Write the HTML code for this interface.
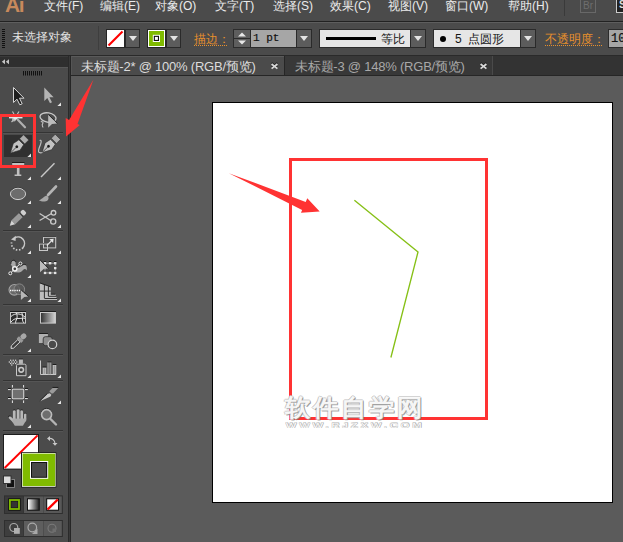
<!DOCTYPE html>
<html><head><meta charset="utf-8">
<style>
*{margin:0;padding:0;box-sizing:border-box}
html,body{width:623px;height:542px;overflow:hidden;background:#5b5b5b;font-family:"Liberation Sans",sans-serif}
.a{position:absolute}
#menubar{left:0;top:0;width:623px;height:22px;background:#4b4b4b;border-bottom:1px solid #222}
.mi{position:absolute;top:-2.4px;font-size:12px;font-weight:500;color:#ececec;line-height:16px;white-space:nowrap}
#ctrl{left:0;top:22px;width:623px;height:34px;background:#4b4b4b;box-shadow:inset 0 1px 0 #5e5e5e;border-bottom:1px solid #262626}
#tools{left:0;top:56px;width:68px;height:486px;background:#4b4b4b}
#toolshead{left:0;top:56px;width:68px;height:12px;background:#2f2f2f;border-top:1px solid #3a3a3a;border-bottom:1px solid #585858}
#tabbar{left:71px;top:55px;width:552px;height:21px;background:#333333;border-top:1px solid #2a2a2a;border-bottom:1px solid #262626}
.tab{position:absolute;top:0;height:19px;font-size:13px;line-height:19px;white-space:nowrap;letter-spacing:-0.22px}
#canvas{left:71px;top:76px;width:552px;height:466px;background:#5b5b5b}
#artboard{left:212px;top:102px;width:401px;height:401px;background:#fff;border:1px solid #000}
.orange{color:#e8902c}
.dd{width:16px;height:19px;background:#2a2a2a}
.dd::before{content:"";position:absolute;left:1px;top:1px;right:1px;bottom:1px;background:#5c5c5c}
.dd::after{content:"";position:absolute;left:4px;top:7px;border-left:4px solid transparent;border-right:4px solid transparent;border-top:5px solid #e4e4e4}
</style></head><body>
<div id="menubar" class="a">
  <div class="a" style="left:5px;top:-7px;font-size:21px;font-weight:bold;color:#c8895c;letter-spacing:-1.3px;line-height:24px">Ai</div>
  <div class="mi" style="left:44px">文件(F)</div>
  <div class="mi" style="left:100px">编辑(E)</div>
  <div class="mi" style="left:155px">对象(O)</div>
  <div class="mi" style="left:215px">文字(T)</div>
  <div class="mi" style="left:273px">选择(S)</div>
  <div class="mi" style="left:330px">效果(C)</div>
  <div class="mi" style="left:388px">视图(V)</div>
  <div class="mi" style="left:445px">窗口(W)</div>
  <div class="mi" style="left:508px">帮助(H)</div>
  <div class="a" style="left:564px;top:0;width:1px;height:16px;background:#3a3a3a"></div>
  <div class="a" style="left:580px;top:-3px;width:16px;height:16px;border:1px solid #686868;color:#6e6e6e;font-size:10px;line-height:16px;text-align:center">Br</div>
  <div class="a" style="left:616px;top:-3px;width:16px;height:16px;border:1px solid #ccc;background:#222;color:#ddd;font-size:10px;font-weight:bold;line-height:14px;padding-left:2px">St</div>
</div>
<div id="ctrl" class="a">
  <div class="a" style="left:2px;top:7px;width:3px;height:20px;background:repeating-linear-gradient(#111 0 1px,transparent 1px 2px)"></div>
  <div class="a" style="left:12px;top:8px;font-size:12px;font-weight:500;line-height:15px;color:#e2e2e2;white-space:nowrap">未选择对象</div>
  <div class="a" style="left:98px;top:4px;width:1px;height:24px;background:#3e3e3e"></div>
  <!-- fill swatch -->
  <svg class="a" style="left:106px;top:7px" width="19" height="19"><rect width="19" height="19" fill="#262626"/><rect x="1" y="1" width="17" height="17" fill="#fff"/><line x1="2.5" y1="16.5" x2="16.5" y2="2.5" stroke="#f00" stroke-width="2.2"/></svg>
  <div class="a dd" style="left:125px;top:7px;width:15px"></div>
  <!-- stroke swatch -->
  <svg class="a" style="left:147px;top:7px" width="19" height="19"><rect width="19" height="19" fill="#262626"/><rect x="1" y="1" width="17" height="17" fill="#fff"/><rect x="2" y="2" width="15" height="15" fill="#80bb00"/><rect x="5.8" y="5.8" width="7.2" height="7.2" fill="#fff"/><rect x="6.8" y="6.8" width="5.2" height="5.2" fill="#111"/><rect x="7.9" y="7.9" width="3" height="3" fill="#fff"/></svg>
  <div class="a dd" style="left:166px;top:7px;width:15px"></div>
  <div class="a orange" style="left:194px;top:10px;width:33px;height:14px;overflow:hidden;font-size:12px;font-weight:500;line-height:14px;white-space:nowrap;border-bottom:1px dotted #e8902c">描边：</div>
  <!-- spinner -->
  <div class="a" style="left:233px;top:7px;width:18px;height:19px;background:#2c2c2c"></div>
  <div class="a" style="left:234px;top:8px;width:16px;height:8px;background:#5e5e5e"></div>
  <div class="a" style="left:234px;top:17px;width:16px;height:8px;background:#5e5e5e"></div>
  <svg class="a" style="left:234px;top:8px" width="16" height="17"><path d="M4 6.5 L8 2.5 L12 6.5Z M4 10.5 L8 14.5 L12 10.5Z" fill="#e8e8e8"/></svg>
  <div class="a" style="left:250px;top:7px;width:47px;height:19px;background:#2c2c2c"></div>
  <div class="a" style="left:251px;top:8px;width:45px;height:17px;background:#a6a6a6;font-family:'Liberation Mono',monospace;font-size:11px;line-height:17px;color:#111;padding-left:2px;white-space:pre;-webkit-text-stroke:0.2px #111">1 pt</div>
  <div class="a dd" style="left:296px;top:7px"></div>
  <!-- profile -->
  <div class="a" style="left:319px;top:7px;width:92px;height:19px;background:#2c2c2c"></div>
  <div class="a" style="left:320px;top:8px;width:90px;height:17px;background:#e6e6e6"></div>
  <div class="a" style="left:326px;top:15px;width:50px;height:3px;background:#000"></div>
  <div class="a" style="left:381px;top:9px;font-size:12px;font-weight:500;line-height:17px;color:#151515;white-space:nowrap">等比</div>
  <div class="a dd" style="left:410px;top:7px"></div>
  <!-- brush -->
  <div class="a" style="left:433px;top:7px;width:88px;height:19px;background:#2c2c2c"></div>
  <div class="a" style="left:434px;top:8px;width:86px;height:17px;background:#e6e6e6"></div>
  <div class="a" style="left:439.5px;top:13.5px;width:6px;height:6px;border-radius:50%;background:#000"></div>
  <div class="a" style="left:455px;top:9px;font-size:12px;font-weight:500;line-height:17px;color:#151515;white-space:pre">5  点圆形</div>
  <div class="a dd" style="left:520px;top:7px"></div>
  <div class="a orange" style="left:545px;top:10px;width:57px;height:14px;overflow:hidden;font-size:12px;font-weight:500;line-height:14px;white-space:nowrap;border-bottom:1px dotted #e8902c">不透明度：</div>
  <div class="a" style="left:608px;top:7px;width:30px;height:19px;background:#2c2c2c"></div>
  <div class="a" style="left:609px;top:8px;width:30px;height:17px;background:#a6a6a6;font-family:'Liberation Mono',monospace;font-size:12px;line-height:17px;color:#111;padding-left:2px;padding-top:1px;-webkit-text-stroke:0.2px #111">10</div>
</div>
<div id="tools" class="a"></div>
<div id="toolshead" class="a"></div>
<!--TOOLS--><svg class="a" style="left:0;top:0" width="68" height="542" viewBox="0 0 68 542"><path d="M5 59.3 L1.8 61.8 L5 64.3Z M9 59.3 L5.8 61.8 L9 64.3Z" fill="#c4c4c4"/><rect x="23" y="71" width="1" height="4.5" fill="#111"/><rect x="25" y="71" width="1" height="4.5" fill="#111"/><rect x="27" y="71" width="1" height="4.5" fill="#111"/><rect x="29" y="71" width="1" height="4.5" fill="#111"/><rect x="31" y="71" width="1" height="4.5" fill="#111"/><rect x="33" y="71" width="1" height="4.5" fill="#111"/><rect x="35" y="71" width="1" height="4.5" fill="#111"/><rect x="37" y="71" width="1" height="4.5" fill="#111"/><rect x="39" y="71" width="1" height="4.5" fill="#111"/><rect x="41" y="71" width="1" height="4.5" fill="#111"/><rect x="3" y="132" width="60" height="1" fill="#343434"/><rect x="3" y="133" width="60" height="1" fill="#555555"/><rect x="3" y="230" width="60" height="1" fill="#343434"/><rect x="3" y="231" width="60" height="1" fill="#555555"/><rect x="3" y="304" width="60" height="1" fill="#343434"/><rect x="3" y="305" width="60" height="1" fill="#555555"/><rect x="3" y="354" width="60" height="1" fill="#343434"/><rect x="3" y="355" width="60" height="1" fill="#555555"/><rect x="3" y="380" width="60" height="1" fill="#343434"/><rect x="3" y="381" width="60" height="1" fill="#555555"/><rect x="3" y="430" width="60" height="1" fill="#343434"/><rect x="3" y="431" width="60" height="1" fill="#555555"/><rect x="4" y="135" width="28" height="22" fill="#303030"/><path d="M61 102.4 L61 106 L57.4 106 Z" fill="#e6e6e6"/><path d="M31 153.4 L31 157 L27.4 157 Z" fill="#e6e6e6"/><path d="M31 176.4 L31 180 L27.4 180 Z" fill="#e6e6e6"/><path d="M61 176.4 L61 180 L57.4 180 Z" fill="#e6e6e6"/><path d="M31 200.4 L31 204 L27.4 204 Z" fill="#e6e6e6"/><path d="M61 200.4 L61 204 L57.4 204 Z" fill="#e6e6e6"/><path d="M31 224.4 L31 228 L27.4 228 Z" fill="#e6e6e6"/><path d="M61 224.4 L61 228 L57.4 228 Z" fill="#e6e6e6"/><path d="M31 250.4 L31 254 L27.4 254 Z" fill="#e6e6e6"/><path d="M61 250.4 L61 254 L57.4 254 Z" fill="#e6e6e6"/><path d="M31 274.4 L31 278 L27.4 278 Z" fill="#e6e6e6"/><path d="M31 298.4 L31 302 L27.4 302 Z" fill="#e6e6e6"/><path d="M61 298.4 L61 302 L57.4 302 Z" fill="#e6e6e6"/><path d="M31 348.4 L31 352 L27.4 352 Z" fill="#e6e6e6"/><path d="M31 374.4 L31 378 L27.4 378 Z" fill="#e6e6e6"/><path d="M61 374.4 L61 378 L57.4 378 Z" fill="#e6e6e6"/><path d="M61 400.4 L61 404 L57.4 404 Z" fill="#e6e6e6"/><path d="M31 424.4 L31 428 L27.4 428 Z" fill="#e6e6e6"/><path d="M13.5 87.5 L13.5 102.5 L17 99.2 L19.8 104.8 L22.2 103.8 L19.5 98.2 L24 98.2 Z" fill="#1e1e1e" stroke="#d4d4d4" stroke-width="1" stroke-linejoin="miter"/><path d="M44.3 87.5 L44.3 101 L47.3 98 L50 103.3 L52 102.3 L49.4 97.2 L53.6 97.2 Z" fill="#b4b4b4"/><g stroke="#c4c4c4" stroke-width="1.1"><line x1="12.5" y1="111.5" x2="15.6" y2="117"/><line x1="19" y1="111.5" x2="15.6" y2="117"/><line x1="11.5" y1="122" x2="15.6" y2="118"/></g><circle cx="14" cy="119.5" r="2" fill="#b8b8b8"/><rect x="9" y="116.6" width="13.5" height="1.8" fill="#dfe8ea"/><circle cx="15.6" cy="117.6" r="2.2" fill="#e8e8e8"/><line x1="17.8" y1="119.8" x2="25" y2="127.3" stroke="#b0b0b0" stroke-width="2.2" stroke-linecap="round"/><ellipse cx="48" cy="117.5" rx="8.1" ry="4.6" transform="rotate(10 48 117.5)" fill="none" stroke="#c8c8c8" stroke-width="1.3"/><path d="M40.8 121.5 C 42.5 121.5, 43.8 122.5, 42.5 124 C 41.5 125, 42.8 126.5, 43 127.5" fill="none" stroke="#c4c4c4" stroke-width="1.1"/><path d="M48.2 114.8 L57 123.6 L52 123.9 L48.2 127.8 Z" fill="#bcbcbc"/><path d="M48.6 114.6 L57.4 123.3" stroke="#1e1e1e" stroke-width="0.8"/><g transform="translate(10.3,153.2) rotate(-45)"><path d="M0 0 L9 -4.8 L15.5 -3.4 L15.5 3.4 L9 4.8 Z" fill="#c2c2c2" stroke="#262626" stroke-width="0.6"/><line x1="0.8" y1="0" x2="8" y2="0" stroke="#3a3a3a" stroke-width="0.8"/><circle cx="9.2" cy="0" r="1.4" fill="#1a1a1a"/><rect x="16.8" y="-3.7" width="5.6" height="7.4" fill="#acacac" stroke="#262626" stroke-width="0.5"/></g><g transform="translate(42,152.7) rotate(-45)"><path d="M0 0 L9 -4.8 L15.5 -3.4 L15.5 3.4 L9 4.8 Z" fill="#c2c2c2" stroke="#262626" stroke-width="0.6"/><line x1="0.8" y1="0" x2="8" y2="0" stroke="#3a3a3a" stroke-width="0.8"/><circle cx="9.2" cy="0" r="1.4" fill="#1a1a1a"/><rect x="16.8" y="-3.7" width="5.6" height="7.4" fill="#acacac" stroke="#262626" stroke-width="0.5"/></g><path d="M39.6 140.5 C 41.5 139.5, 41.5 142, 40.5 144.5 C 39 148, 37.5 151, 39 152.3 C 40 153, 41.5 152.8, 42.5 152.5" fill="none" stroke="#c0c0c0" stroke-width="1.2"/><rect x="12" y="162" width="12.5" height="1" fill="#1e1e1e"/><path d="M12.2 163 L24.2 163 L24.2 166.5 L23.2 166.5 L23 165 L19.5 165 L19.5 174.5 L21.3 174.5 L21.3 176 L14.6 176 L14.6 174.5 L16.9 174.5 L16.9 165 L13.4 165 L13.2 166.5 L12.2 166.5 Z" fill="#c0c0c0"/><line x1="41" y1="177" x2="54.5" y2="163.3" stroke="#c8c8c8" stroke-width="1.4"/><ellipse cx="18" cy="193.2" rx="7.8" ry="6" fill="#1e1e1e"/><ellipse cx="18" cy="193.9" rx="7.6" ry="5.7" fill="#6c6c6c" stroke="#d0d0d0" stroke-width="1"/><line x1="56" y1="186.5" x2="48" y2="195" stroke="#b4b4b4" stroke-width="2.6" stroke-linecap="round"/><path d="M38.8 200.2 C 41.5 200, 43.5 196.5, 46 195.8 C 48.5 195.5, 49.5 198.5, 47.5 200.5 C 45.5 202, 41.5 201.8, 38.8 200.2 Z" fill="#a8a8a8"/><g transform="translate(9.8,225.7) rotate(-44)"><path d="M0 0 L5 -2.7 L5 2.7 Z" fill="#d4d4d4"/><rect x="5" y="-2.7" width="10.5" height="5.4" fill="#9a9a9a"/><rect x="15.5" y="-2.7" width="1.2" height="5.4" fill="#3a3a3a"/><rect x="16.7" y="-2.7" width="4.3" height="5.4" rx="1.5" fill="#cfcfcf"/></g><g stroke="#c8c8c8" stroke-width="1.3" fill="none"><path d="M39.6 213.5 L51.5 221"/><path d="M39.6 220.5 L51.5 213.5"/><circle cx="53.5" cy="212.8" r="2.3"/><circle cx="53.2" cy="221.5" r="2.6"/></g><path d="M14.75 237.87 A6.5 6.5 0 0 1 22.98 247.68" fill="none" stroke="#c8c8c8" stroke-width="1.5"/><path d="M22.98 247.68 A6.5 6.5 0 0 1 11.6 242.37" fill="none" stroke="#c8c8c8" stroke-width="1.8" stroke-dasharray="1.5 1.6"/><path d="M11 239.5 L15.8 235.8 L15.6 241 Z" fill="#c8c8c8"/><rect x="43" y="236" width="13" height="1" fill="#1e1e1e"/><rect x="43.5" y="237.3" width="12.2" height="10.6" fill="#4e4e4e" stroke="#c8c8c8" stroke-width="1"/><rect x="39" y="243" width="8" height="1" fill="#1e1e1e"/><rect x="39.5" y="244" width="8" height="6.5" fill="none" stroke="#c8c8c8" stroke-width="1"/><line x1="46.8" y1="245.5" x2="52.5" y2="239.8" stroke="#e6e6e6" stroke-width="1.1"/><path d="M53.6 238.8 L49.3 239.3 L53.1 243.1 Z" fill="#e6e6e6"/><path d="M10.8 264.8 C 10.5 262, 12 260.6, 13.5 260.8 C 15 261, 15.9 262.5, 15.6 264 L 15.9 267.2 C 17.5 268.5, 19.5 268, 21 266.5 C 22.5 265, 24 264.5, 25.3 265 C 26.7 265.5, 27.2 268, 26.7 270.6 C 26.1 269.6, 25.3 268.8, 24.5 269.1 C 23 269.6, 21.5 272.6, 19 272.6 L 14 272.2 C 13 270, 12.6 267.2, 11.6 265.6 Z" fill="#a8a8a8"/><path d="M10.8 264.2 C 10.8 261.8, 12.2 260.2, 13.6 260.2 C 15 260.3, 15.6 261.2, 15.9 262" fill="none" stroke="#1e1e1e" stroke-width="0.8"/><path d="M21.5 265.8 C 23 264.5, 24.5 264, 25.8 264.6" fill="none" stroke="#1e1e1e" stroke-width="0.8"/><line x1="10.3" y1="273.3" x2="20.4" y2="263.5" stroke="#e8e8e8" stroke-width="1"/><g fill="#3a3a3a" stroke="#f0f0f0"><circle cx="10.3" cy="273.3" r="1.5" stroke-width="1"/><circle cx="14.8" cy="268.8" r="2.1" stroke-width="1.5"/><circle cx="20.4" cy="263.5" r="1.5" stroke-width="1"/></g><rect x="45" y="263.2" width="10.2" height="9.7" fill="none" stroke="#a8a8a8" stroke-width="0.9"/><rect x="43.8" y="261.0" width="2.4" height="1" fill="#1e1e1e"/><rect x="43.8" y="262.0" width="2.4" height="2.4" fill="#e4e4e4"/><rect x="48.9" y="261.0" width="2.4" height="1" fill="#1e1e1e"/><rect x="48.9" y="262.0" width="2.4" height="2.4" fill="#e4e4e4"/><rect x="54.0" y="261.0" width="2.4" height="1" fill="#1e1e1e"/><rect x="54.0" y="262.0" width="2.4" height="2.4" fill="#e4e4e4"/><rect x="43.8" y="270.7" width="2.4" height="1" fill="#1e1e1e"/><rect x="43.8" y="271.7" width="2.4" height="2.4" fill="#e4e4e4"/><rect x="48.9" y="270.7" width="2.4" height="1" fill="#1e1e1e"/><rect x="48.9" y="271.7" width="2.4" height="2.4" fill="#e4e4e4"/><rect x="54.0" y="270.7" width="2.4" height="1" fill="#1e1e1e"/><rect x="54.0" y="271.7" width="2.4" height="2.4" fill="#e4e4e4"/><rect x="54.0" y="265.8" width="2.4" height="1" fill="#1e1e1e"/><rect x="54.0" y="266.8" width="2.4" height="2.4" fill="#e4e4e4"/><path d="M40 260.3 L48.1 268.5 L44 268.8 L40 272.2 Z" fill="#bcbcbc"/><path d="M40.2 260 L48.6 268.4" stroke="#1e1e1e" stroke-width="0.9"/><circle cx="14.3" cy="289.8" r="5.3" fill="#686868" stroke="#a4a4a4" stroke-width="1.1"/><circle cx="19.3" cy="289.2" r="5.3" fill="#5a5a5a" fill-opacity="0.85" stroke="#8a8a8a" stroke-width="1"/><line x1="10" y1="290.5" x2="21" y2="290.5" stroke="#ffffff" stroke-width="1.4" stroke-dasharray="1.3 0.9"/><path d="M20.9 290.2 L28.2 296.6 L24.3 297 L20.9 299.9 Z" fill="#b8b8b8"/><path d="M21.3 290 L28.5 296.3" stroke="#1e1e1e" stroke-width="0.8"/><path d="M39.8 283.3 L50.8 287.3 L50.8 294.3 L55.5 294.6 L56.3 297 L57.3 300 L39.8 300 Z" fill="#bcbcbc"/><g fill="none" stroke="#1e1e1e" stroke-width="0.9"><path d="M39.8 282.9 L51 286.9"/><path d="M44.4 284.8 L44.4 298"/><path d="M48.4 286.3 L48.4 296"/><path d="M40 291.1 L50.8 291.1"/><path d="M50.8 294.2 L55.3 294.2"/><path d="M48.4 296.3 L56.2 296.3"/><path d="M44.4 298.5 L57 298.5"/></g><rect x="10" y="311" width="16" height="1" fill="#1e1e1e"/><rect x="10.5" y="312.5" width="15" height="10.6" fill="#2e2e2e" stroke="#c8c8c8" stroke-width="1"/><g fill="none" stroke="#e6e6e6" stroke-width="1"><path d="M11 316.5 C 13 314.5, 16 313.5, 19 314 C 21.5 314.5, 23 315.5, 25 317"/><path d="M11 322 C 13 319.5, 15 318.5, 18 318.5 C 21 318.5, 23 318, 25.2 318.3"/><path d="M16 312.5 C 17.5 315, 17.5 317.5, 16.3 320 C 15.5 321.5, 15.5 322.5, 15.8 323.5"/><path d="M21.5 312.5 C 23 314.5, 23 317, 22.5 319 C 22.3 320.5, 23 322, 24 323.2"/></g><defs><linearGradient id="gr" x1="0" x2="1" y1="0" y2="0"><stop offset="0" stop-color="#2e2e2e"/><stop offset="1" stop-color="#d6d6d6"/></linearGradient></defs><rect x="40" y="311" width="16" height="1" fill="#1e1e1e"/><rect x="40.5" y="312.5" width="15" height="10.6" fill="url(#gr)" stroke="#c8c8c8" stroke-width="1"/><g transform="translate(11,348.4) rotate(-44)"><path d="M0 0 L2 -1.6 L11 -1.6 L11 1.6 L2 1.6 Z" fill="#3a3a3a" stroke="#e0e0e0" stroke-width="0.9"/><rect x="11" y="-3.2" width="3.2" height="6.4" fill="#9a9a9a"/><rect x="14.2" y="-2.6" width="6.2" height="5.2" rx="2.3" fill="#a8a8a8"/></g><rect x="38.9" y="333" width="9" height="1" fill="#1e1e1e"/><rect x="38.9" y="334" width="9" height="9" fill="#b0b0b0"/><rect x="43.2" y="336.7" width="9" height="9" rx="2.2" fill="#8c8c8c" stroke="#2a2a2a" stroke-width="0.8"/><circle cx="52.4" cy="344.4" r="4.3" fill="#4a4a4a" stroke="#d0d0d0" stroke-width="1.2"/><circle cx="10.7" cy="360.3" r="0.75" fill="#d4d4d4"/><circle cx="13.2" cy="360.3" r="0.75" fill="#d4d4d4"/><circle cx="15.6" cy="360.3" r="0.75" fill="#d4d4d4"/><circle cx="9.3" cy="361.9" r="0.75" fill="#d4d4d4"/><circle cx="11.8" cy="361.9" r="0.75" fill="#d4d4d4"/><circle cx="14.3" cy="361.9" r="0.75" fill="#d4d4d4"/><circle cx="16.8" cy="361.9" r="0.75" fill="#d4d4d4"/><circle cx="10.7" cy="363.5" r="0.75" fill="#d4d4d4"/><circle cx="13.2" cy="363.5" r="0.75" fill="#d4d4d4"/><circle cx="15.6" cy="363.5" r="0.75" fill="#d4d4d4"/><circle cx="11.8" cy="365.1" r="0.75" fill="#d4d4d4"/><rect x="18.9" y="358.6" width="4" height="1" fill="#1e1e1e"/><rect x="18.9" y="359.5" width="4" height="4.3" fill="#b8b8b8"/><path d="M16.5 375.7 L16.5 365.5 Q16.5 364.2 17.8 364.2 L24.7 364.2 Q26 364.2 26 365.5 L26 375.7 Z" fill="#454545" stroke="#c8c8c8" stroke-width="1"/><circle cx="21.2" cy="369.8" r="2.3" fill="none" stroke="#c8c8c8" stroke-width="1.6"/><path d="M40.5 360.5 L40.5 374.5 L56 374.5" fill="none" stroke="#c8c8c8" stroke-width="1"/><rect x="43.2" y="367.8" width="2.6" height="6.5" fill="#9a9a9a" stroke="#cccccc" stroke-width="0.9"/><rect x="47.9" y="362.5" width="3" height="12" fill="#7a7a7a" stroke="#c8c8c8" stroke-width="0.6"/><rect x="53.2" y="365" width="2.6" height="9.3" fill="#9a9a9a" stroke="#cccccc" stroke-width="0.9"/><rect x="47.5" y="361.5" width="4" height="1" fill="#1e1e1e"/><rect x="52.5" y="364" width="4" height="1" fill="#1e1e1e"/><rect x="42.5" y="366.5" width="4" height="1" fill="#1e1e1e"/><rect x="12.3" y="389.3" width="11.4" height="9.5" rx="0.8" fill="#707070" stroke="#d0d0d0" stroke-width="1.1"/><g fill="#1e1e1e"><rect x="8" y="388" width="3" height="1"/><rect x="25" y="388" width="3" height="1"/><rect x="8" y="397" width="3" height="1"/><rect x="25" y="397" width="3" height="1"/></g><g fill="#d8d8d8"><rect x="11.9" y="385" width="1.1" height="2.6"/><rect x="23" y="385" width="1.1" height="2.6"/><rect x="11.9" y="400.4" width="1.1" height="2.6"/><rect x="23" y="400.4" width="1.1" height="2.6"/><rect x="8" y="389" width="2.8" height="1.1"/><rect x="25" y="389" width="2.8" height="1.1"/><rect x="8" y="398" width="2.8" height="1.1"/><rect x="25" y="398" width="2.8" height="1.1"/></g><path d="M40 401.2 L47.5 394 L49.8 393.2 L51.4 394.8 L50.5 396.6 Z" fill="#c8c8c8"/><path d="M39.8 400.8 L47.2 393.6" stroke="#1e1e1e" stroke-width="0.8"/><path d="M49.3 391.2 L52.6 387.9 L58.2 387.9 L53 393.6 L51.5 393.4 Z" fill="#9a9a9a"/><rect x="52.5" y="386.9" width="5.8" height="1" fill="#1e1e1e"/><g fill="#1e1e1e"><rect x="13" y="409.6" width="2.5" height="1.4" rx="1"/><rect x="16.9" y="408.6" width="2.5" height="1.4" rx="1"/><rect x="20.5" y="409.6" width="2.5" height="1.4" rx="1"/><rect x="24" y="412.7" width="2.3" height="1.4" rx="1"/><circle cx="9.6" cy="416.6" r="1.2"/></g><g fill="#b8b8b8"><rect x="12.9" y="410.3" width="2.7" height="10" rx="1.3"/><rect x="16.8" y="409.3" width="2.7" height="10" rx="1.3"/><rect x="20.4" y="410.3" width="2.6" height="10" rx="1.3"/><rect x="24" y="413.4" width="2.3" height="8" rx="1.1"/></g><line x1="10" y1="417.6" x2="14.5" y2="422" stroke="#b8b8b8" stroke-width="2.6" stroke-linecap="round"/><path d="M12.8 418.5 L26.3 418.5 L25.8 421 L22.9 425.8 L14.8 425.8 L12.2 421.5 Z" fill="#ababab"/><line x1="50.5" y1="419" x2="56" y2="424.5" stroke="#b4b4b4" stroke-width="2.4" stroke-linecap="round"/><path d="M41.5 412 A5.3 5.3 0 0 1 51.5 412" fill="none" stroke="#1e1e1e" stroke-width="1"/><circle cx="46.6" cy="414.6" r="5" fill="#6e6e6e" stroke="#bcbcbc" stroke-width="1.6"/><rect x="3" y="434" width="36" height="35.6" fill="#1e1e1e"/><rect x="4" y="435" width="34" height="33.6" fill="#ffffff"/><line x1="4.6" y1="468" x2="37.6" y2="435.4" stroke="#ff0000" stroke-width="2"/><rect x="21" y="452.2" width="35.4" height="35.4" fill="#1e1e1e"/><rect x="22" y="453" width="33.6" height="33.8" fill="#ffffff"/><rect x="22.6" y="453.6" width="32.6" height="32.5" fill="#80bb00"/><rect x="30" y="461" width="18.2" height="17.8" fill="#ffffff"/><rect x="31" y="462" width="16.2" height="15.8" fill="#111"/><rect x="32" y="463" width="14.2" height="13.8" fill="#494949"/><path d="M48.5 438.5 C 52 438, 54.8 440, 55 443.5" fill="none" stroke="#c8c8c8" stroke-width="1.1"/><path d="M47 438.5 L50 436 L50 441 Z M52.5 443 L57.5 443 L55 445.8 Z" fill="#c8c8c8"/><rect x="6.5" y="479.5" width="8" height="8" fill="#111" stroke="#8a8a8a" stroke-width="0.9"/><rect x="3.5" y="476" width="7.5" height="7.5" fill="#dcdcdc" stroke="#2a2a2a" stroke-width="0.9"/><rect x="4" y="495.4" width="58.8" height="18.6" fill="#2f2f2f"/><rect x="5" y="496.4" width="18.5" height="16.6" fill="#3a3a3a"/><rect x="24" y="496.4" width="19" height="16.6" fill="#585858"/><rect x="43.3" y="496.4" width="18.5" height="16.6" fill="#585858"/><rect x="8.2" y="498.3" width="12.5" height="12.4" fill="#111"/><rect x="9" y="499.1" width="10.9" height="10.8" fill="#80bb00"/><rect x="10.8" y="500.9" width="7.3" height="7.2" fill="#111"/><rect x="11.3" y="501.4" width="6.3" height="6.2" fill="#333"/><defs><linearGradient id="gw" x1="0" x2="1"><stop offset="0" stop-color="#ffffff"/><stop offset="1" stop-color="#222"/></linearGradient></defs><rect x="27" y="498.3" width="12.8" height="12.4" fill="#111"/><rect x="28" y="499.3" width="10.8" height="10.4" fill="url(#gw)"/><rect x="46.2" y="498.3" width="12.8" height="12.4" fill="#111"/><rect x="47.2" y="499.3" width="10.8" height="10.4" fill="#fff"/><line x1="47.5" y1="509.5" x2="57.8" y2="499.5" stroke="#f00" stroke-width="2.4"/><rect x="4" y="520" width="58.8" height="17" fill="#2f2f2f"/><rect x="5" y="521" width="18.5" height="15" fill="#3e3e3e"/><rect x="24" y="521" width="19" height="15" fill="#5e5e5e"/><rect x="43.3" y="521" width="18.5" height="15" fill="#5a5a5a"/><circle cx="13.8" cy="527.5" r="4" fill="none" stroke="#aaa" stroke-width="1.2"/><rect x="14" y="528" width="5.8" height="5.8" fill="#b0b0b0"/><circle cx="32.3" cy="527.5" r="4.3" fill="none" stroke="#aaa" stroke-width="1.2"/><path d="M37.5 528.5 L37.5 534 L32 534 Z" fill="#a8a8a8"/><circle cx="52" cy="528.3" r="4" fill="none" stroke="#7a7a7a" stroke-width="1.1"/><rect x="52.5" y="528.5" width="3.5" height="3.5" fill="#6e6e6e"/></svg><!--/TOOLS-->
<div class="a" style="left:68px;top:56px;width:3px;height:486px;background:#393939;border-left:1px solid #2a2a2a;border-right:1px solid #262626"></div>
<div id="tabbar" class="a">
  <div class="tab" style="left:0;width:213px;background:#4b4b4b;color:#dcdcdc;padding-left:9px;border-top:1px solid #5a5a5a;border-left:1px solid #555;line-height:20px">未标题-2* @ 100% (RGB/预览)</div>
  <div class="tab" style="left:213px;width:209px;background:#383838;color:#a8a8a8;padding-left:10px;border-left:1px solid #262626;border-right:1px solid #4a4a4a;line-height:21px">未标题-3 @ 148% (RGB/预览)</div>
</div>
<div id="canvas" class="a"></div>
<div id="artboard" class="a"></div>
<svg class="a" style="left:270px;top:61.5px" width="9" height="9"><path d="M1.6 1.6 L7.4 6.2 M7.4 1.6 L1.6 6.2" stroke="#1e1e1e" stroke-width="1.5" transform="translate(0,-0.8)"/><path d="M1.6 2 L7.4 6.6 M7.4 2 L1.6 6.6" stroke="#d8d8d8" stroke-width="1.8"/></svg>
<svg class="a" style="left:479px;top:61.5px" width="9" height="9"><path d="M1.6 1.6 L7.4 6.2 M7.4 1.6 L1.6 6.2" stroke="#1e1e1e" stroke-width="1.5" transform="translate(0,-0.8)"/><path d="M1.6 2 L7.4 6.6 M7.4 2 L1.6 6.6" stroke="#d8d8d8" stroke-width="1.8"/></svg>
<svg class="a" style="left:0;top:0" width="623" height="542">
  <rect x="290.5" y="159.5" width="196" height="259" fill="none" stroke="#ff3333" stroke-width="3"/>
  <polyline points="354.4,200.2 418,252 390.9,357.5" fill="none" stroke="#86c016" stroke-width="1.35"/>
  <path d="M228.8 173.2 L305.7 201.9 L307.3 198.2 L319.7 211.5 L301 212.7 L302.1 209.9 Z" fill="#ff3333"/>
  <rect x="0.5" y="115.5" width="34" height="51" fill="none" stroke="#ff3333" stroke-width="3"/>
  <path d="M93.5 79.5 L69.1 119.9 L65.7 118.1 L66.1 136.5 L79.8 125.1 L77.5 124 Z" fill="#ff3333"/>
</svg>
<!--WM-->
<div class="a" style="left:285px;top:393px;font-size:25px;line-height:30px;font-weight:900;color:rgba(255,255,255,0.92);letter-spacing:3.1px;white-space:nowrap;transform:scaleY(0.94);transform-origin:0 0;text-shadow:1px 1.5px 0 rgba(140,140,140,0.75),-1px 0 0 rgba(190,190,190,0.8),0 -1px 0 rgba(200,200,200,0.8),1px 0 0 rgba(180,180,180,0.8)">软件自学网</div>
<div class="a" style="left:286px;top:417px;font-size:11px;line-height:12px;color:#fff;letter-spacing:3px;white-space:nowrap;transform:scaleY(0.68);transform-origin:0 100%;text-shadow:0.7px 0.7px 0 #a8a8a8,-0.7px -0.7px 0 #d0d0d0,0.7px -0.7px 0 #c8c8c8,-0.7px 0.7px 0 #c0c0c0">WWW.RJZXW.COM</div>
</body></html>
